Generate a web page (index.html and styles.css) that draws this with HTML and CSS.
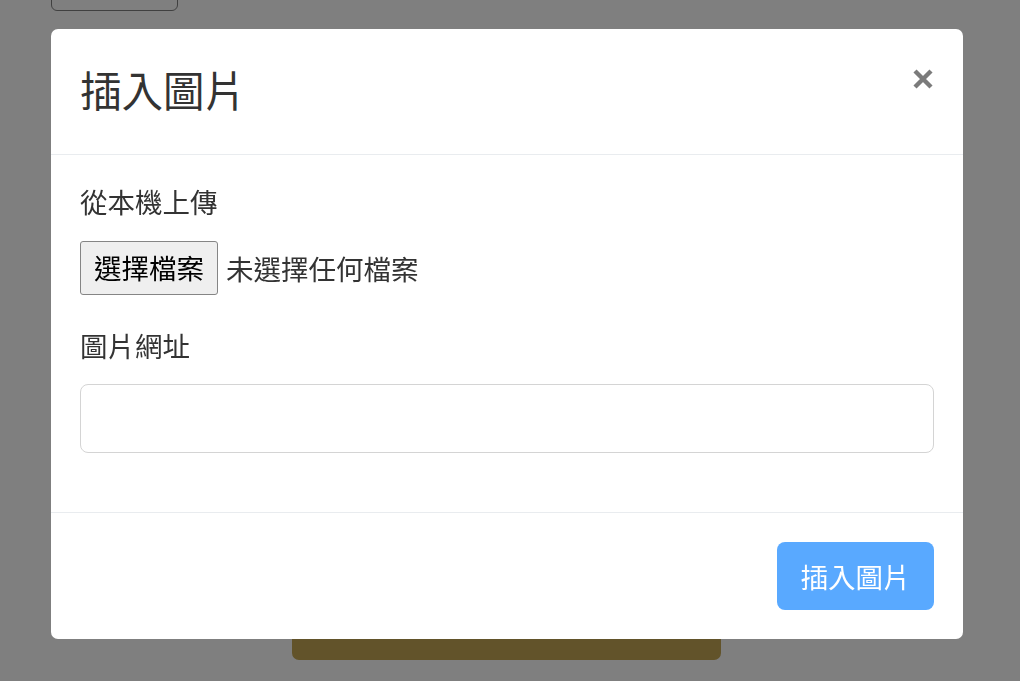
FILE: index.html
```html
<!DOCTYPE html>
<html lang="zh-Hant">
<head>
    <meta charset="UTF-8">
    <meta name="viewport" content="width=device-width, initial-scale=1.0">
    <title>插入圖片</title>
    <link rel="stylesheet" href="styles.css">
</head>
<body>
    <div class="page">
        <div class="page-button"></div>
        <div class="page-bar"></div>
    </div>

    <div class="backdrop"></div>

    <div class="modal">
        <div class="modal-dialog">
            <header class="modal-header">
                <h4 class="modal-title">插入圖片</h4>
                <button class="close" type="button" aria-label="Close">
                    <svg width="22" height="22" viewBox="0 0 22 22">
                        <path d="M3 3 L19 19 M19 3 L3 19" stroke="currentColor" stroke-width="4.4" stroke-linecap="butt"/>
                    </svg>
                </button>
            </header>
            <div class="modal-body">
                <div class="form-group">
                    <label class="form-label">從本機上傳</label>
                    <div class="file-input">
                        <span class="file-button">選擇檔案</span>
                        <span class="file-name">未選擇任何檔案</span>
                    </div>
                </div>
                <div class="form-group">
                    <label class="form-label">圖片網址</label>
                    <input class="form-control" type="text">
                </div>
            </div>
            <footer class="modal-footer">
                <button class="btn-primary" type="button" disabled>插入圖片</button>
            </footer>
        </div>
    </div>
</body>
</html>
```

FILE: styles.css
```css
html, body {
  margin: 0;
  height: 100%;
}

body {
  background: #fff;
  font-family: "Noto Sans CJK TC", "Noto Sans", sans-serif;
  color: #333;
  overflow: hidden;
}

/* page behind the modal */
.page {
  height: 100vh;
  display: flex;
  flex-direction: column;
  box-sizing: border-box;
}

.page-button {
  width: 125px;
  height: 40px;
  margin-top: -31px;
  margin-left: 51px;
  border: 1px solid #818181;
  border-radius: 6px;
}

.page-bar {
  width: 429px;
  height: 120px;
  margin-top: auto;
  margin-bottom: 21px;
  margin-left: 292px;
  background: #c4a654;
  border-radius: 7px;
}

.backdrop {
  position: fixed;
  inset: 0;
  background: rgba(0, 0, 0, 0.5);
}

/* modal */
.modal {
  position: fixed;
  inset: 0;
  padding: 29px 57px 0 51px;
}

.modal-dialog {
  background: #fff;
  border-radius: 7px;
  height: 610px;
  display: flex;
  flex-direction: column;
}

.modal-header {
  display: flex;
  justify-content: space-between;
  align-items: flex-start;
  padding: 30px 29px 0 29px;
  height: 126px;
  box-sizing: border-box;
  border-bottom: 1px solid #e9ecef;
}

.modal-title {
  margin: 0;
  font-size: 41.5px;
  font-weight: 400;
  line-height: 60px;
  color: #333;
}

.close {
  background: none;
  border: 0;
  padding: 0;
  margin-top: 9px;
  margin-right: 0;
  color: #7b7b7b;
  line-height: 0;
}

.modal-body {
  padding: 26px 29px 0 29px;
  height: 357px;
  box-sizing: border-box;
}

.form-group {
  margin-bottom: 30px;
}

.form-label {
  display: block;
  font-size: 27.5px;
  line-height: 41px;
  margin-bottom: 19px;
}

.form-group + .form-group .form-label {
  margin-bottom: 18px;
}

.file-input {
  display: flex;
  align-items: center;
  gap: 8px;
  font-size: 27.5px;
}

.file-button {
  display: inline-block;
  box-sizing: border-box;
  height: 54px;
  line-height: 50px;
  padding: 0 13px;
  background: #efefef;
  border: 1px solid #858585;
  border-radius: 3px;
  color: #000;
}

.file-name {
  color: #333;
}

.form-control {
  display: block;
  box-sizing: border-box;
  width: 100%;
  height: 69px;
  border: 1px solid #d4d4d4;
  border-radius: 8px;
  font-size: 27.5px;
  padding: 0 20px;
  outline: none;
}

.modal-footer {
  display: flex;
  justify-content: flex-end;
  padding: 29px 29px 0 29px;
  border-top: 1px solid #e9ecef;
}

.btn-primary {
  height: 68px;
  width: 157px;
  border: 0;
  border-radius: 8px;
  background: #59a9ff;
  color: #fff;
  font-family: "Noto Sans CJK TC", "Noto Sans", sans-serif;
  font-size: 27.5px;
  padding: 0;
}
```
